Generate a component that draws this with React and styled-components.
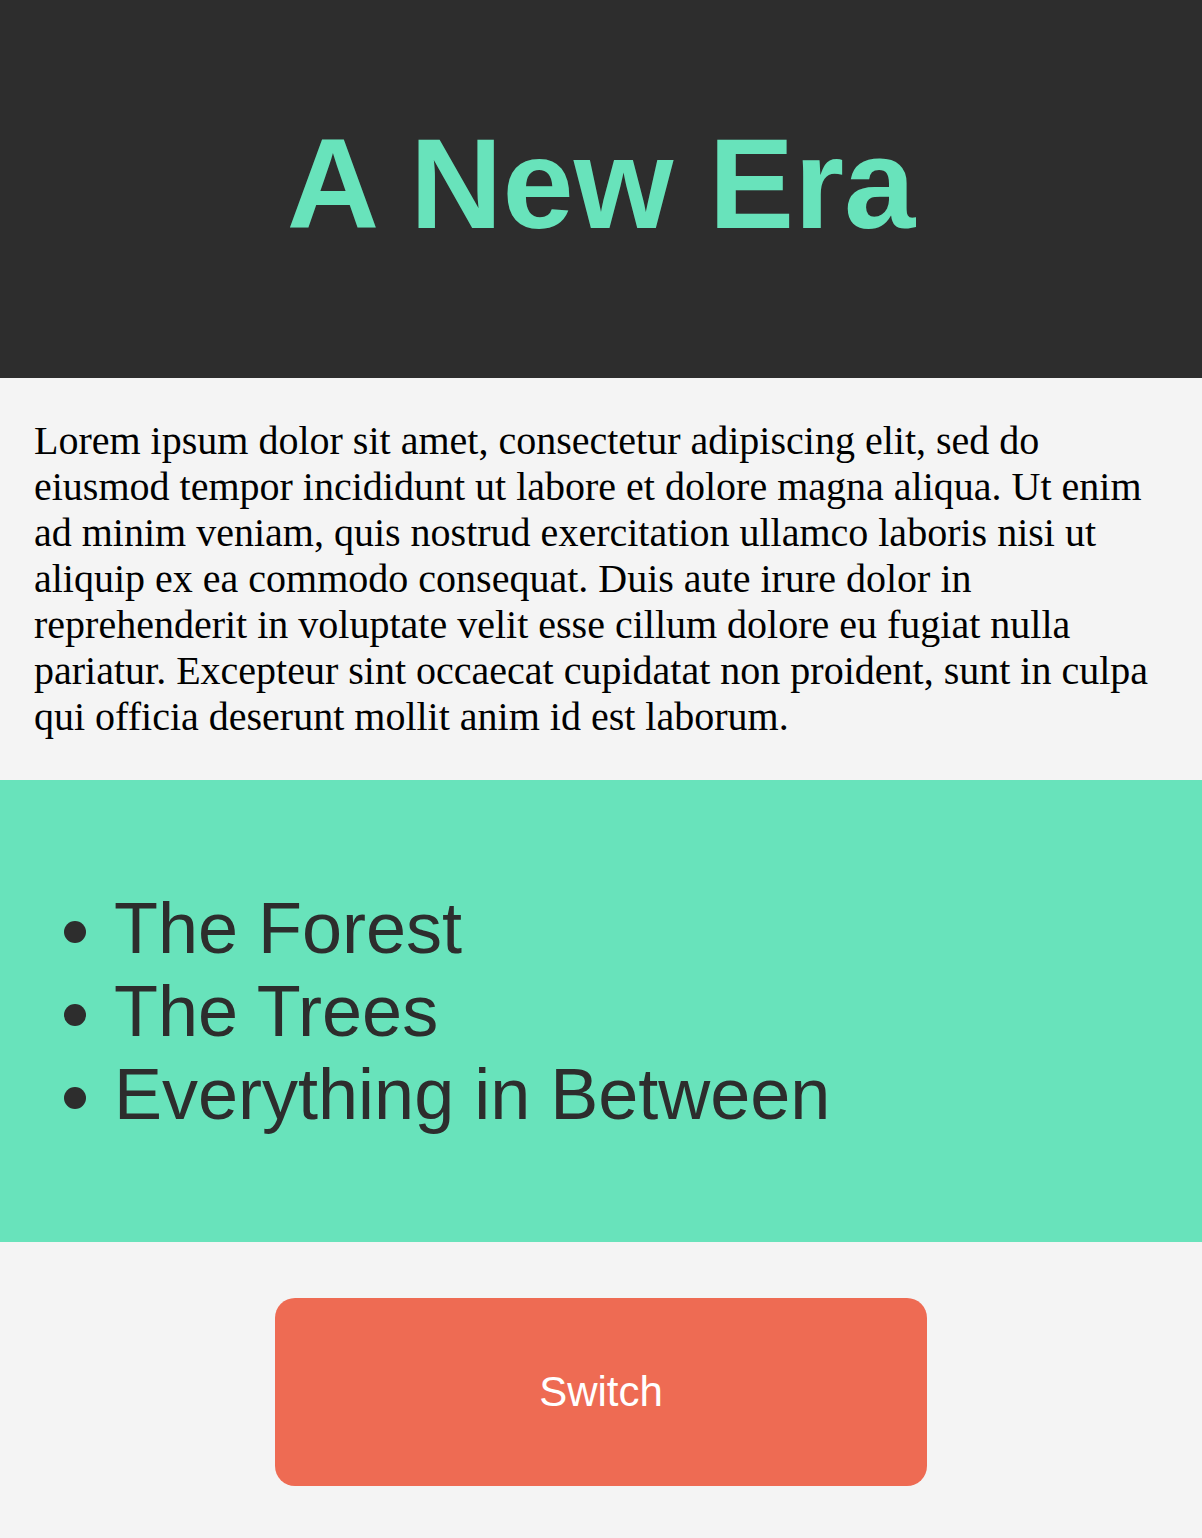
import React from 'react'
import styled, { createGlobalStyle } from 'styled-components'

const GlobalStyle = createGlobalStyle`
  body {
    margin: 0;
    background: #f4f4f4;
    font-family: "Liberation Serif", "Times New Roman", serif;
  }
`;

const Header = styled.header`
  background: #2d2d2d;
  height: 378px;
  box-sizing: border-box;
  padding-top: 110px;
`;

const Title = styled.h1`
  margin: 0;
  text-align: center;
  color: #68e3bb;
  font-family: "Liberation Sans", Arial, sans-serif;
  font-weight: bold;
  font-size: 128px;
  line-height: normal;
`;

const Intro = styled.section`
  background: #f4f4f4;
  padding: 0 34px;
  overflow: hidden;
`;

const Text = styled.p`
  margin: 40px 0;
  font-size: 40px;
  line-height: 46px;
  color: #000;
`;

const Band = styled.section`
  background: #68e3bb;
  padding: 35px 34px;
  overflow: hidden;
`;

const List = styled.ul`
  margin: 72px 0;
  padding-left: 80px;
  font-family: "Liberation Sans", Arial, sans-serif;
  font-size: 72px;
  line-height: 1.15;
  color: #2d2d2d;
  list-style: disc;
`;

const Footer = styled.section`
  display: flex;
  justify-content: center;
  padding: 56px 0 52px;
  background: #f4f4f4;
`;

const Button = styled.button`
  width: 652px;
  height: 188px;
  border: none;
  border-radius: 20px;
  background: #ee6b53;
  color: #fff;
  font-family: "Liberation Sans", Arial, sans-serif;
  font-size: 42px;
  cursor: pointer;
`;

const App = () => {
  return (
    <>
      <GlobalStyle />
      <Header>
        <Title>A New Era</Title>
      </Header>
      <Intro>
        <Text>
          Lorem ipsum dolor sit amet, consectetur adipiscing elit, sed do
          eiusmod tempor incididunt ut labore et dolore magna aliqua. Ut enim
          ad minim veniam, quis nostrud exercitation ullamco laboris nisi ut
          aliquip ex ea commodo consequat. Duis aute irure dolor in
          reprehenderit in voluptate velit esse cillum dolore eu fugiat nulla
          pariatur. Excepteur sint occaecat cupidatat non proident, sunt in culpa
          qui officia deserunt mollit anim id est laborum.
        </Text>
      </Intro>
      <Band>
        <List>
          <li>The Forest</li>
          <li>The Trees</li>
          <li>Everything in Between</li>
        </List>
      </Band>
      <Footer>
        <Button>Switch</Button>
      </Footer>
    </>
  )
}

export default App
